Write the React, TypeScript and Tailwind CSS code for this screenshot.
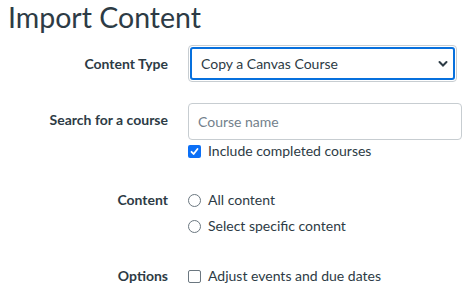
export default function App() {
  return (
    <div className="w-[473px] h-[305px] overflow-hidden bg-white text-[#2d3b45] font-['Lato','Noto_Sans',sans-serif]">
      <h1 className="pl-2 pt-[1px] text-[28.5px] leading-[33px] font-normal">Import Content</h1>

      <div className="mt-[11px] flex items-center">
        <div className="w-[168px] text-right text-sm font-bold">Content Type</div>
        <div className="ml-5 w-[269px] h-[37px] rounded border border-[#c7cdd1] p-[1px]">
          <div className="h-full rounded-[3px] border-2 border-[#0770dd] flex items-center justify-between pl-[9px] pr-[5px]">
            <span className="text-sm">Copy a Canvas Course</span>
            <svg width="10" height="8" viewBox="0 0 10 8" fill="none">
              <path d="M1.5 2 L5 5.5 L8.5 2" stroke="#2d3b45" strokeWidth="2" strokeLinecap="round" />
            </svg>
          </div>
        </div>
      </div>

      <div className="mt-[21px] flex">
        <div className="w-[168px] pt-[7px] text-right text-sm font-bold">Search for a course</div>
        <div className="ml-5 flex flex-col">
          <div className="w-[274px] h-[37px] rounded border border-[#c7cdd1] flex items-center pl-[9px]">
            <span className="text-sm text-[#73818c]">Course name</span>
          </div>
          <div className="mt-[3px] flex items-center gap-[7px]">
            <span className="w-[13px] h-[13px] rounded-[2px] bg-[#0b6ff6] flex items-center justify-center">
              <svg width="9" height="9" viewBox="0 0 9 9" fill="none">
                <path d="M1.5 4.8 L3.6 7 L7.5 2" stroke="white" strokeWidth="1.8" strokeLinecap="round" strokeLinejoin="round" />
              </svg>
            </span>
            <span className="text-sm leading-4">Include completed courses</span>
          </div>
        </div>
      </div>

      <div className="mt-[28px] flex">
        <div className="w-[168px] text-right text-sm font-bold leading-[26px]">Content</div>
        <div className="ml-5 flex flex-col">
          <div className="h-[26px] flex items-center gap-[7px]">
            <span className="w-[13px] h-[13px] rounded-full border border-[#6b7780]" />
            <span className="text-sm">All content</span>
          </div>
          <div className="h-[26px] flex items-center gap-[7px]">
            <span className="w-[13px] h-[13px] rounded-full border border-[#6b7780]" />
            <span className="text-sm">Select specific content</span>
          </div>
        </div>
      </div>

      <div className="mt-[24px] flex">
        <div className="w-[168px] text-right text-sm font-bold leading-[26px]">Options</div>
        <div className="ml-5 h-[26px] flex items-center gap-[7px]">
          <span className="w-[13px] h-[13px] rounded-[2px] border border-[#6b7780]" />
          <span className="text-sm">Adjust events and due dates</span>
        </div>
      </div>
    </div>
  )
}
